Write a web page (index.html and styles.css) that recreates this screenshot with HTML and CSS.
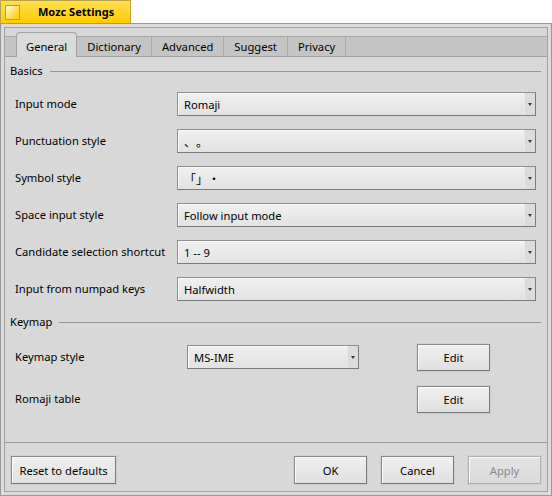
FILE: index.html
```html
<!DOCTYPE html>
<html>
<head>
<meta charset="utf-8">
<link rel="stylesheet" href="styles.css">
</head>
<body>
<div class="titlebar">
  <div class="wtab">
    <span class="closebox"></span>
    <span class="wtitle">Mozc Settings</span>
  </div>
</div>
<div class="window">
  <div class="inner">
    <div class="tabview">
      <div class="tabbar">
        <div class="tab active">General</div>
        <div class="tab">Dictionary</div>
        <div class="tab">Advanced</div>
        <div class="tab">Suggest</div>
        <div class="tab">Privacy</div>
      </div>
      <div class="page">
        <div class="group-title"><span>Basics</span><i class="rule"></i></div>
        <div class="rows">
          <div class="row"><span class="label">Input mode</span><div class="select"><span class="val">Romaji</span><span class="arrow"></span></div></div>
          <div class="row"><span class="label">Punctuation style</span><div class="select"><span class="val cjk"><span class="sp">、</span>。</span><span class="arrow"></span></div></div>
          <div class="row"><span class="label">Symbol style</span><div class="select"><span class="val cjk">「<span class="sp">」</span>・</span><span class="arrow"></span></div></div>
          <div class="row"><span class="label">Space input style</span><div class="select"><span class="val">Follow input mode</span><span class="arrow"></span></div></div>
          <div class="row"><span class="label">Candidate selection shortcut</span><div class="select"><span class="val">1 -- 9</span><span class="arrow"></span></div></div>
          <div class="row"><span class="label">Input from numpad keys</span><div class="select"><span class="val">Halfwidth</span><span class="arrow"></span></div></div>
        </div>
        <div class="group-title kg"><span>Keymap</span><i class="rule"></i></div>
        <div class="keymap">
          <span class="label">Keymap style</span>
          <div class="select small"><span class="val">MS-IME</span><span class="arrow"></span></div>
          <button class="btn">Edit</button>
          <span class="label">Romaji table</span>
          <span></span>
          <button class="btn">Edit</button>
        </div>
      </div>
    </div>
    <div class="buttons">
      <button class="btn reset">Reset to defaults</button>
      <span class="spacer"></span>
      <button class="btn">OK</button>
      <button class="btn">Cancel</button>
      <button class="btn disabled">Apply</button>
    </div>
  </div>
</div>
</body>
</html>
```

FILE: styles.css
```css
* { box-sizing: border-box; }
html, body { margin: 0; padding: 0; background: #ffffff; }
body {
  font-family: "Noto Sans", "Noto Sans CJK JP", sans-serif;
  font-size: 11.2px;
  color: #000;
  width: 552px;
  height: 496px;
  overflow: hidden;
}
.titlebar { height: 23px; display: flex; }
.wtab {
  width: 131px;
  height: 23px;
  background: linear-gradient(#ffe04d, #ffcb00);
  border: 1px solid #b9a24a;
  border-bottom: none;
  display: flex;
  align-items: center;
  padding-left: 4px;
}
.closebox {
  width: 15px;
  height: 15px;
  border: 1px solid #b8a040;
  background: linear-gradient(135deg, #fffbe8, #ffd21a 80%);
  margin-top: 1px;
}
.wtitle {
  font-weight: bold;
  font-size: 11px;
  margin-left: 18px;
  line-height: 16px;
}
.window {
  height: 473px;
  border: 1px solid #9a9a9a;
  background: #dcdcdc;
  padding: 3px;
}
.inner {
  height: 100%;
  border: 1px solid #a4a4a4;
  background: #d8d8d8;
  display: flex;
  flex-direction: column;
}
.tabview {
  height: 415px;
  border-bottom: 1px solid #9a9a9a;
  display: flex;
  flex-direction: column;
  padding-top: 8px;
}
.tabbar {
  height: 21px;
  background: #c4c4c4;
  border-top: 1px solid #a8a8a8;
  border-bottom: 1px solid #a0a0a0;
  display: flex;
  padding-left: 11px;
  align-items: stretch;
}
.tab {
  padding: 0 10px;
  line-height: 19px;
  border-right: 1px solid #a8a8a8;
}
.tab.active {
  background: #dadada;
  border: 1px solid #a4a4a4;
  border-bottom: none;
  border-radius: 4px 4px 0 0;
  margin-top: -5px;
  margin-bottom: -1px;
  padding: 4px 9px 0 9px;
  line-height: 19px;
}
.page {
  flex: 1;
  padding: 6px 6px 0 5px;
}
.group-title {
  display: flex;
  align-items: center;
  height: 16px;
  line-height: 16px;
}
.group-title .rule {
  flex: 1;
  height: 1px;
  background: #959595;
  margin-left: 7px;
  margin-top: 1px;
}
.rows {
  margin-top: 13px;
  padding-left: 5px;
  padding-right: 5px;
  display: flex;
  flex-direction: column;
  gap: 13px;
}
.row {
  display: flex;
  align-items: center;
  height: 24px;
}
.label { width: 162px; line-height: 16px; margin-top: -1px; }
.select {
  flex: 1;
  height: 24px;
  border: 1px solid #8e8e8e;
  border-right-color: #7e7e7e;
  border-bottom-color: #7a7a7a;
  background: linear-gradient(#f0f0f0, #e2e2e2);
  display: flex;
  align-items: center;
  box-shadow: inset 1px 1px 0 #fafafa;
}
.select .val { flex: 1; padding-left: 6px; }
.select .cjk { font-size: 12px; font-family: "Noto Sans CJK JP", sans-serif; }
.select .cjk .sp { margin-right: 6px; }
.select .arrow {
  width: 11px;
  height: 100%;
  background: #dcdcdc;
  border-left: 1px solid #e8e8e8;
  position: relative;
}
.select .arrow::after {
  content: "";
  position: absolute;
  left: 3px;
  top: 10px;
  border-left: 2.5px solid transparent;
  border-right: 2.5px solid transparent;
  border-top: 3px solid #3a3a3a;
}
.kg { margin-top: 13px; }
.keymap {
  margin-top: 13px;
  padding-left: 5px;
  display: grid;
  grid-template-columns: 172px 172px 73px;
  column-gap: 0;
  row-gap: 14px;
  align-items: center;
}
.keymap .label { width: auto; }
.keymap .select.small { width: 172px; }
.keymap .btn { margin-left: 58px; margin-top: 1px; }
.btn {
  font-family: "Noto Sans", sans-serif;
  font-size: 11.2px;
  color: #000;
  width: 73px;
  height: 27px;
  border: 1px solid #8a8a8a;
  border-right-color: #7a7a7a;
  border-bottom-color: #777;
  background: linear-gradient(#f0f0f0, #e0e0e0);
  box-shadow: inset 1px 1px 0 #fafafa, 0 0 0 1px #cfcfcf;
  padding: 0;
  margin: 0;
}
.buttons {
  flex: 1;
  display: flex;
  align-items: center;
  padding: 6px 6px 0 6px;
  gap: 14px;
}
.buttons .btn { height: 28px; }
.buttons .reset { width: 105px; }
.spacer { flex: 1; }
.btn.disabled {
  color: #8a8a8a;
  border-color: #b0b0b0;
  background: linear-gradient(#e4e4e4, #dadada);
}
```
